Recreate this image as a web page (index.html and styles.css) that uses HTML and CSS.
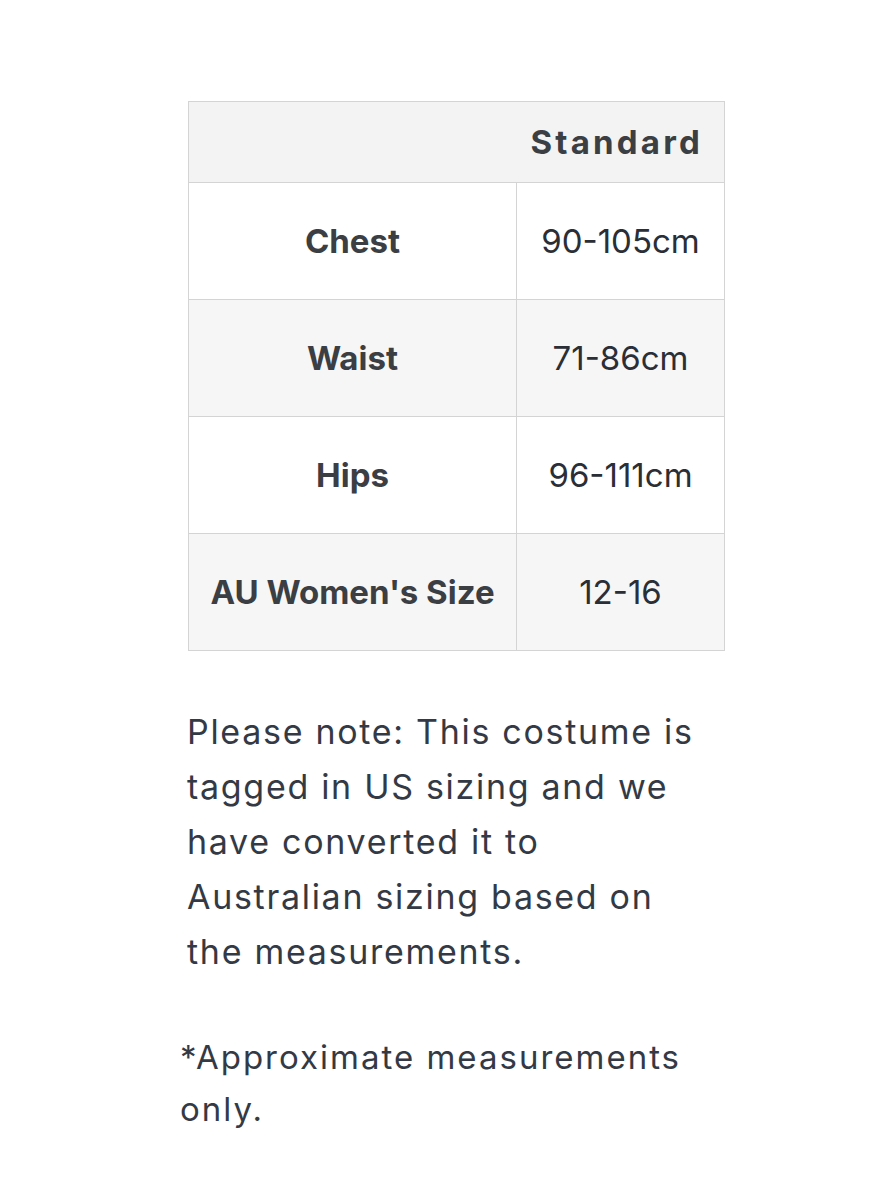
FILE: index.html
```html
<!DOCTYPE html>
<html lang="en">
<head>
<meta charset="UTF-8">
<meta name="viewport" content="width=device-width, initial-scale=1.0">
<title>Size Chart</title>
<link rel="stylesheet" href="styles.css">
</head>
<body>
<div class="page">
  <table class="size-table">
    <thead>
      <tr>
        <th class="head" colspan="2">Standard</th>
      </tr>
    </thead>
    <tbody>
      <tr>
        <td class="label">Chest</td>
        <td class="value">90-105cm</td>
      </tr>
      <tr class="shade">
        <td class="label">Waist</td>
        <td class="value">71-86cm</td>
      </tr>
      <tr>
        <td class="label">Hips</td>
        <td class="value">96-111cm</td>
      </tr>
      <tr class="shade">
        <td class="label">AU Women's Size</td>
        <td class="value">12-16</td>
      </tr>
    </tbody>
  </table>

  <p class="note">Please note: This costume is tagged in US sizing and we have converted it to Australian sizing based on the measurements.</p>

  <p class="approx">*Approximate measurements only.</p>
</div>
</body>
</html>
```

FILE: styles.css
```css
body {
  margin: 0;
  background-color: #fff;
  font-family: Inter, "Open Sans", sans-serif;
  color: #2f343c;
}

.page {
  padding: 101px 0 0 188px;
}

.size-table {
  border-collapse: collapse;
  width: 537px;
}

.size-table th,
.size-table td {
  border: 1px solid #d4d4d4;
}

.head {
  height: 80px;
  background-color: #f3f3f3;
  text-align: right;
  padding: 0 21px 0 0;
  font-size: 33px;
  font-weight: 700;
  letter-spacing: 3.2px;
  color: #3b3e43;
}

.size-table td {
  height: 116px;
  text-align: center;
  font-size: 33px;
  padding: 0;
}

.label {
  width: 327px;
  font-weight: 700;
  color: #3b3e43;
}

.value {
  color: #2a2e36;
}

.shade td {
  background-color: #f6f6f6;
}

.note {
  width: 530px;
  margin: 53px 0 0 -1px;
  font-size: 34px;
  line-height: 55px;
  letter-spacing: 1.7px;
  color: #343a45;
}

.approx {
  width: 540px;
  margin: 52px 0 0 -8px;
  font-size: 33px;
  line-height: 52px;
  letter-spacing: 2px;
  color: #343a45;
}
```
